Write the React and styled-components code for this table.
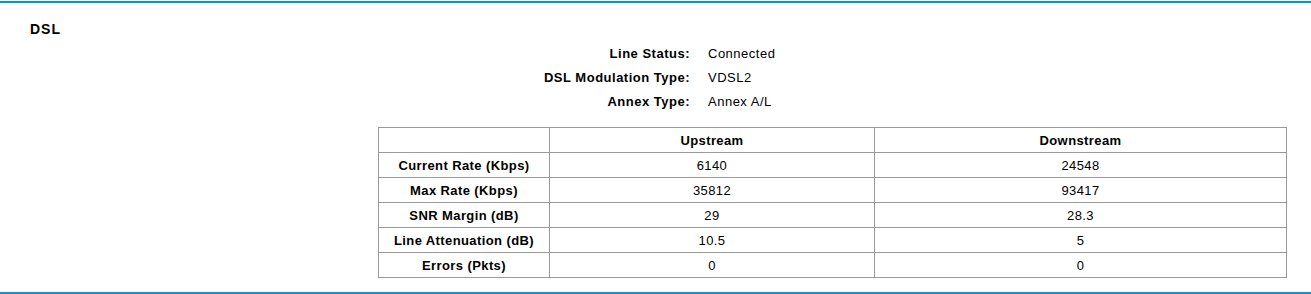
import React from "react";
import styled, { createGlobalStyle } from "styled-components";

const Global = createGlobalStyle`
  html, body { margin: 0; padding: 0; background: #fff; }
  body { font-family: "Liberation Sans", Arial, sans-serif; color: #000; }
`;

const Panel = styled.div`
  width: 1311px;
  box-sizing: border-box;
  border-top: 2px solid #0099cc;
  border-bottom: 2px solid #0099cc;
  margin-top: 1px;
  height: 293px;
  display: flex;
  flex-direction: column;
`;

const Title = styled.h2`
  margin: 0;
  padding: 17px 0 0 30px;
  font-size: 14px;
  letter-spacing: 1px;
  line-height: 18px;
  font-weight: bold;
`;

const InfoList = styled.dl`
  margin: 4px 0 0 0;
  display: grid;
  grid-template-columns: 690px 1fr;
  column-gap: 18px;
  font-size: 13px;
  letter-spacing: 0.5px;
  line-height: 24px;
`;

const Label = styled.dt`
  text-align: right;
  font-weight: bold;
  margin: 0;
`;

const Value = styled.dd`
  margin: 0;
`;

const Table = styled.table`
  margin: 13px 0 0 378px;
  width: 909px;
  border-collapse: collapse;
  table-layout: fixed;
  font-size: 13px;
  letter-spacing: 0.4px;
`;

const Cell = styled.td`
  border: 1px solid #999;
  height: 25px;
  padding: 1px 0 0 0;
  box-sizing: border-box;
  line-height: 22px;
  text-align: center;
  font-weight: ${(p) => (p.$head ? "bold" : "normal")};
  vertical-align: middle;
`;

const info = [
  ["Line Status:", "Connected"],
  ["DSL Modulation Type:", "VDSL2"],
  ["Annex Type:", "Annex A/L"],
];

const rows = [
  ["Current Rate (Kbps)", "6140", "24548"],
  ["Max Rate (Kbps)", "35812", "93417"],
  ["SNR Margin (dB)", "29", "28.3"],
  ["Line Attenuation (dB)", "10.5", "5"],
  ["Errors (Pkts)", "0", "0"],
];

export default function App() {
  return (
    <>
      <Global />
      <Panel>
        <Title>DSL</Title>
        <InfoList>
          {info.map(([l, v]) => (
            <React.Fragment key={l}>
              <Label>{l}</Label>
              <Value>{v}</Value>
            </React.Fragment>
          ))}
        </InfoList>
        <Table>
          <colgroup>
            <col style={{ width: 171 }} />
            <col style={{ width: 325 }} />
            <col />
          </colgroup>
          <tbody>
            <tr>
              <Cell />
              <Cell $head>Upstream</Cell>
              <Cell $head>Downstream</Cell>
            </tr>
            {rows.map(([l, u, d]) => (
              <tr key={l}>
                <Cell $head>{l}</Cell>
                <Cell>{u}</Cell>
                <Cell>{d}</Cell>
              </tr>
            ))}
          </tbody>
        </Table>
      </Panel>
    </>
  );
}
